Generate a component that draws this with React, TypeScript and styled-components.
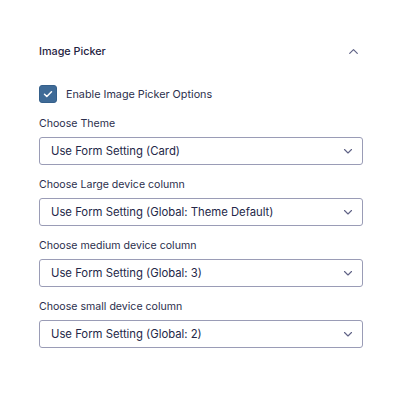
import styled, { createGlobalStyle } from 'styled-components';

const GlobalStyle = createGlobalStyle`
  html, body {
    margin: 0;
    padding: 0;
    background: #ffffff;
  }
  body {
    font-family: Inter, "Noto Sans", sans-serif;
    color: #242748;
  }
`;

const Panel = styled.section`
  width: 400px;
  height: 400px;
  box-sizing: border-box;
  padding: 42px 37px 0 39px;
`;

const Header = styled.div`
  display: flex;
  align-items: center;
  justify-content: space-between;
  height: 18px;
`;

const Title = styled.h2`
  margin: 0;
  font-size: 10.8px;
  font-weight: 500;
  color: #1f2342;
`;

const ToggleIcon = styled.span`
  display: flex;
  margin-right: 3px;
`;

const Body = styled.div`
  margin-top: 25px;
  display: flex;
  flex-direction: column;
`;

const CheckRow = styled.label`
  display: flex;
  align-items: center;
  gap: 9px;
  font-size: 10.8px;
  color: #2c2f4d;
`;

const Box = styled.span`
  width: 18px;
  height: 18px;
  box-sizing: border-box;
  border-radius: 3px;
  background: #3f6b97;
  border: 1px solid #35608b;
  display: flex;
  align-items: center;
  justify-content: center;
`;

const Field = styled.div`
  margin-top: 13px;
  display: flex;
  flex-direction: column;
  gap: 6px;

  &:first-of-type {
    margin-top: 14px;
  }
`;

const Label = styled.span`
  font-size: 10.6px;
  line-height: 14px;
  color: #2c2f4d;
`;

const Select = styled.div`
  height: 28px;
  box-sizing: border-box;
  border: 1px solid #9a9cb6;
  border-radius: 3px;
  padding: 0 8px 0 11px;
  display: flex;
  align-items: center;
  justify-content: space-between;
  font-size: 11.3px;
  color: #242748;
`;

const Chevron = ({ up, size = 12 }: { up?: boolean; size?: number }) => (
  <svg width={size} height={size} viewBox="0 0 12 12" fill="none">
    <path
      d={up ? 'M2.5 7.8L6 4.3l3.5 3.5' : 'M2.5 4.5L6 8l3.5-3.5'}
      stroke="#5f6286"
      strokeWidth="1.1"
      strokeLinecap="round"
      strokeLinejoin="round"
    />
  </svg>
);

const fields = [
  { label: 'Choose Theme', value: 'Use Form Setting (Card)' },
  { label: 'Choose Large device column', value: 'Use Form Setting (Global: Theme Default)' },
  { label: 'Choose medium device column', value: 'Use Form Setting (Global: 3)' },
  { label: 'Choose small device column', value: 'Use Form Setting (Global: 2)' },
];

const App = () => (
  <>
    <GlobalStyle />
    <Panel>
      <Header>
        <Title>Image Picker</Title>
        <ToggleIcon>
          <Chevron up size={13} />
        </ToggleIcon>
      </Header>
      <Body>
        <CheckRow>
          <Box>
            <svg width="12" height="12" viewBox="0 0 12 12" fill="none">
              <path d="M2.5 6.2l2.3 2.3L9.5 3.8" stroke="#fff" strokeWidth="1.5" strokeLinecap="round" strokeLinejoin="round" />
            </svg>
          </Box>
          Enable Image Picker Options
        </CheckRow>
        {fields.map(f => (
          <Field key={f.label}>
            <Label>{f.label}</Label>
            <Select>
              <span>{f.value}</span>
              <Chevron />
            </Select>
          </Field>
        ))}
      </Body>
    </Panel>
  </>
);

export default App;
